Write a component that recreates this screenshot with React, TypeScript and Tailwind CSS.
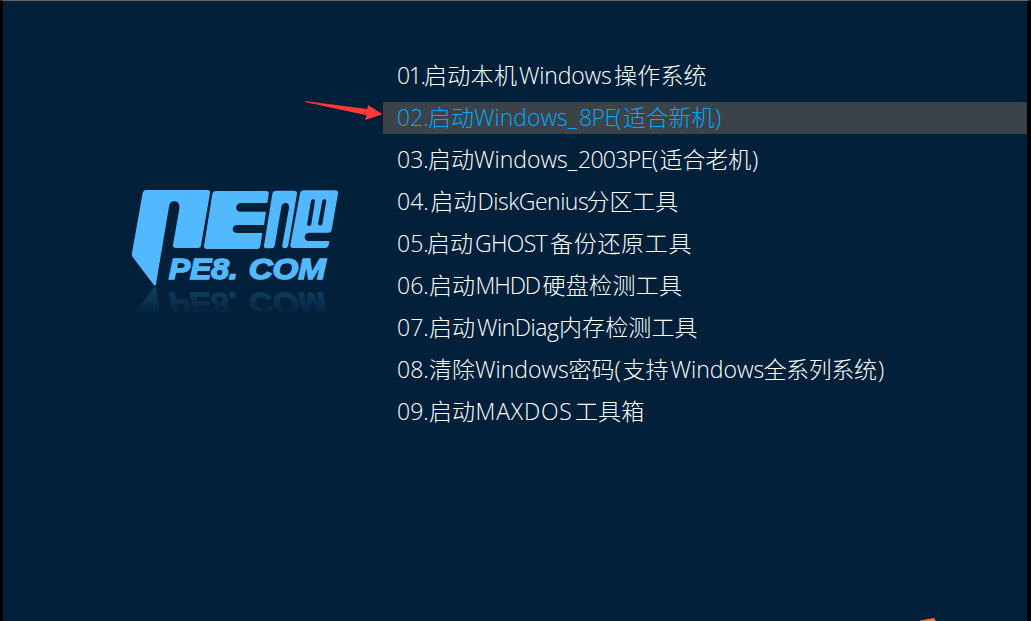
type Segment = { text: string; width: number; spacing: number };

type Entry = { segments: Segment[]; active?: boolean };

const s = (text: string, width: number, spacing = 0): Segment => ({
  text,
  width,
  spacing,
});

const entries: Entry[] = [
  { segments: [s("01.", 27, -1.4), s("启动本机", 95, 0.3), s("Windows", 95, -0.2), s("操作系统", 100, 0.2)] },
  {
    active: true,
    segments: [s("02.", 31), s("启动", 46), s("Windows_", 105), s("8PE", 36, -0.6), s("(", 8), s("适合新机", 92, -0.2), s(")", 10)],
  },
  { segments: [s("03.", 31), s("启动", 46), s("Windows_", 104), s("2003PE", 74, -0.7), s("(", 7.5), s("适合老机", 92.5, -0.1), s(")", 10)] },
  { segments: [s("04.", 33.5), s("启动", 47), s("DiskGenius", 109, -0.5), s("分区工具", 100, -0.1)] },
  { segments: [s("05.", 30), s("启动", 48), s("GHOST", 75, -0.7), s("备份还原工具", 150, 0.7)] },
  { segments: [s("06.", 32), s("启动", 46.5), s("MHDD", 67, -1.1), s("硬盘检测工具", 150, 0.3)] },
  { segments: [s("07.", 32), s("启动", 48), s("WinDiag", 82, -0.5), s("内存检测工具", 150, 0.1)] },
  {
    segments: [
      s("08.", 32),
      s("清除", 46),
      s("Windows", 93.5),
      s("密码", 46),
      s("(", 8),
      s("支持", 48),
      s("Windows", 93),
      s("全系列系统", 114.5, -0.4),
      s(")", 10),
    ],
  },
  { segments: [s("09.", 32), s("启动", 46.5), s("MAXDOS", 99.5, 0.8), s("工具箱", 80, 0.1)] },
];

function Mark() {
  return (
    <>
      <path d="M80 30H262Q271 30 270 39L243 196Q242 204 234 204H168Q158 204 159 195L178 86Q180 64 163 64Q149 64 147 80L108 312Q106 320 101 314L38 231Q35 227 36 219L68 39Q70 30 80 30Z" />
      <path d="M289 33H438Q448 33 446 43L442 69H362Q350 71 348 82Q348 94 360 95H438L432 135H350Q338 137 338 148Q338 158 350 159H427L421 198Q420 207 411 207H260Q251 207 252 198L277 43Q279 33 289 33Z" />
      <path d="M469 32H522Q532 32 531 41L505 196Q503 205 494 205Q485 204 487 195L507 84Q508 69 497 69Q486 70 484 81L464 198Q463 205 455 205H440Q431 205 432 197L457 41Q459 32 469 32Z" />
      <path
        fillRule="evenodd"
        d="M552 31H644Q655 31 654 41L635 149Q634 158 625 158H568Q555 160 554 170Q554 182 566 183H628L626 195Q624 204 615 204H519Q510 204 511 195L540 41Q542 31 552 31ZM573 62Q580 52 585 62L574 133Q569 142 561 134ZM607 62Q614 52 619 62L607 132Q602 141 594 133Z"
      />
      <g
        fontFamily='"Liberation Sans", Arial, sans-serif'
        fontSize="90"
        fontWeight="bold"
        fontStyle="italic"
        stroke="currentColor"
        strokeWidth="4.5"
      >
        <text x="146" y="298" textLength="208" lengthAdjust="spacingAndGlyphs">
          PE8.
        </text>
        <text x="386" y="298" textLength="232" lengthAdjust="spacingAndGlyphs">
          COM
        </text>
      </g>
    </>
  );
}

function Logo() {
  return (
    <svg viewBox="0 0 690 435" className="h-[145px] w-[230px] text-[#52b9ff]" fill="currentColor">
      <defs>
        <linearGradient id="fade" x1="0" y1="319" x2="0" y2="408" gradientUnits="userSpaceOnUse">
          <stop offset="0" stopColor="#fff" stopOpacity="0.23" />
          <stop offset="1" stopColor="#fff" stopOpacity="0" />
        </linearGradient>
        <mask id="reflection" maskUnits="userSpaceOnUse" x="0" y="319" width="690" height="116">
          <rect y="319" width="690" height="116" fill="url(#fade)" />
        </mask>
      </defs>
      <Mark />
      <g mask="url(#reflection)">
        <g transform="translate(0 638) scale(1 -1)">
          <Mark />
        </g>
      </g>
    </svg>
  );
}

function MenuItem({ segments, active }: Entry) {
  return (
    <li
      className={`flex h-8 items-center pb-0.5 pl-3.5 text-[23px] leading-[30px] font-light whitespace-nowrap ${
        active ? "bg-[#3b4349] text-[#00a8ff]" : "text-white"
      }`}
    >
      {segments.map(({ text, width, spacing }, i) => (
        <span key={i} className="block shrink-0" style={{ width, letterSpacing: spacing }}>
          {text}
        </span>
      ))}
    </li>
  );
}

export default function App() {
  return (
    <div className="relative flex h-[621px] w-[1031px] overflow-hidden border-t border-r-4 border-l-[3px] border-t-[#666] border-r-black border-l-black bg-[#02203a] font-['Open_Sans','Noto_Sans_CJK_SC',sans-serif]">
      <div className="w-[380px] shrink-0 pt-[179px] pl-[117px]">
        <Logo />
      </div>
      <ul className="flex flex-1 flex-col gap-2.5 pt-[59px]">
        {entries.map((entry, i) => (
          <MenuItem key={i} {...entry} />
        ))}
      </ul>
      <svg viewBox="0 0 80 22" className="absolute top-[98px] left-[301px] h-[22px] w-20" fill="#ff3936">
        <path d="M1 2.1L63.3 10L64 6L78.5 15.3L61 21L62.5 16.3L1 3Z" />
      </svg>
      <svg viewBox="0 0 16 4" className="absolute bottom-0 left-[917px] h-1 w-4" fill="#ff7033">
        <path d="M0 3.5L14 1L16 4H0Z" />
      </svg>
    </div>
  );
}
